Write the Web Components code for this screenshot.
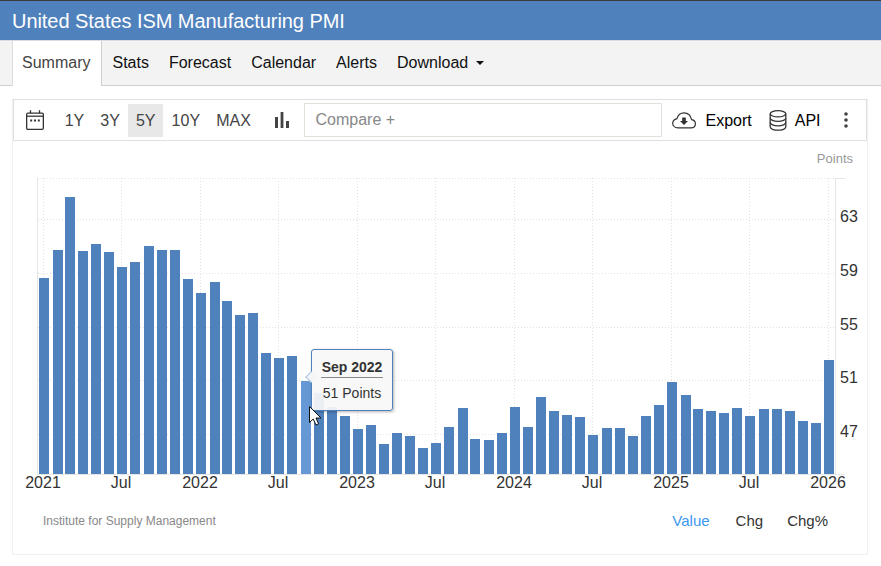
<!DOCTYPE html>
<html lang="en">
<head>
<meta charset="utf-8">
<title>United States ISM Manufacturing PMI</title>
<style>
  html, body { margin: 0; background: #fff; }
  body { font-family: "Liberation Sans", Arial, sans-serif; color: #333; }
</style>
</head>
<body>
<page-header>United States ISM Manufacturing PMI</page-header>
<nav-tabs></nav-tabs>
<chart-card>
  <chart-toolbar></chart-toolbar>
  <bar-chart></bar-chart>
  <chart-footer></chart-footer>
</chart-card>

<script>
// page title bar
class PageHeader extends HTMLElement {
    constructor() {
        super();
        this.attachShadow({ mode: "open" });
        this.shadowRoot.innerHTML = `
        <style>
          :host {
            display: block;
            box-sizing: border-box;
            height: 41px;
            padding: 9px 0 0 12px;
            background-color: #4f81bd;
            border-top: 1px solid #3b3b3b;
            border-bottom: 1px solid #d8dde3;
            color: #fff;
            font-size: 20px;
            line-height: 23px;
            letter-spacing: -0.05px;
          }
        </style>
        <slot></slot>
    `;
    }
}

// tabs under the title
class NavTabs extends HTMLElement {
    constructor() {
        super();
        this.attachShadow({ mode: "open" });
        const tabs = ["Stats", "Forecast", "Calendar", "Alerts"];
        this.shadowRoot.innerHTML = `
        <style>
          :host {
            display: flex;
            box-sizing: border-box;
            height: 45px;
            padding-left: 12px;
            background-color: #f3f3f3;
            border-bottom: 1px solid #cfcfcf;
            font-size: 16px;
            color: #111;
          }
          a {
            display: flex;
            align-items: center;
            padding: 0 10px 1px 10px;
            height: 43px;
          }
          .active {
            height: 45px;
            box-sizing: border-box;
            padding: 0 11px 1px 9px;
            background-color: #fff;
            color: #444;
            border-left: 1px solid #dcdcdc;
            border-right: 1px solid #cfcfcf;
          }
          .caret {
            width: 0;
            height: 0;
            margin-left: 8px;
            margin-top: 1px;
            border-top: 4px solid #111;
            border-left: 4px solid transparent;
            border-right: 4px solid transparent;
          }
        </style>
        <a class="active">Summary</a>
        ${tabs.map((t) => `<a>${t}</a>`).join("")}
        <a>Download<span class="caret"></span></a>
    `;
    }
}

// outer box around toolbar, chart and footer
class ChartCard extends HTMLElement {
    constructor() {
        super();
        this.attachShadow({ mode: "open" });
        this.shadowRoot.innerHTML = `
        <style>
          :host {
            display: block;
            box-sizing: border-box;
            width: 856px;
            height: 456px;
            margin: 13px 0 0 12px;
            border: 1px solid #f0f0f0;
            border-top: none;
          }
        </style>
        <slot></slot>
    `;
    }
}

class ChartToolbar extends HTMLElement {
    constructor() {
        super();
        this.attachShadow({ mode: "open" });
        const ranges = ["1Y", "3Y", "5Y", "10Y", "MAX"];
        this.shadowRoot.innerHTML = `
        <style>
          :host {
            display: flex;
            align-items: center;
            box-sizing: border-box;
            height: 42px;
            border: 1px solid #e0e0e0;
            font-size: 16px;
            color: #000;
          }
          svg { display: block; flex: none; }
          .calendar { margin: 0 13px 0 12px; }
          .ranges { display: flex; gap: 0.7px; height: 33px; margin-top: 1px; color: #444; }
          .ranges span { display: flex; align-items: center; padding: 0 7.7px; }
          .ranges .on { background-color: #e8e8e8; }
          .bars { margin: 0 15px 0 16px; }
          .compare {
            display: flex;
            align-items: center;
            box-sizing: border-box;
            width: 358px;
            height: 34px;
            padding: 0 0 0 11px;
            border: 1px solid #e2e2da;
            color: #888;
          }
          .cloud { margin: 1px 10px 0 10px; }
          .db { margin: 0 8px 0 17px; }
          .label { padding-top: 1px; }
          .dots { margin-left: 23px; }
        </style>
        <svg class="calendar" width="18" height="20" viewBox="0 0 18 20" fill="none" stroke="#333" stroke-width="1.3">
          <rect x="0.65" y="3.2" width="16.7" height="16.1" rx="1.2"/>
          <path d="M0.8 6.2H17.2"/>
          <path d="M4.5 0.3V3.2M13.5 0.3V3.2"/>
          <path d="M4.2 10.5h2M8 10.5h2M11.8 10.5h2" stroke-width="1.8"/>
        </svg>
        <div class="ranges">
          ${ranges.map((r) => `<span class="${r === "5Y" ? "on" : ""}">${r}</span>`).join("")}
        </div>
        <svg class="bars" width="14" height="16" viewBox="0 0 14 16" fill="#444">
          <rect x="0" y="5" width="3" height="11"/>
          <rect x="5.6" y="0" width="2.8" height="16"/>
          <rect x="11" y="9" width="3" height="7"/>
        </svg>
        <div class="compare">Compare +</div>
        <svg class="cloud" width="24" height="17" viewBox="0 0 24 17" fill="none" stroke="#333" stroke-width="1.2">
          <path d="M6 15.8H19C22 15.8 23.4 13.8 23.4 11.7C23.4 9.7 21.9 8 19.6 7.6C18.6 3.5 15.6 0.9 12 0.9C8.5 0.9 6 3 5 6.6C2.5 7.3 0.7 9.2 0.7 11.5C0.7 14 3 15.8 6 15.8Z"/>
          <path d="M10.2 5.5H13.8V9H16L12 13L8 9H10.2Z" fill="#333" stroke="none"/>
        </svg>
        <span class="label">Export</span>
        <svg class="db" width="18" height="21" viewBox="0 0 18 21" fill="none" stroke="#333" stroke-width="1.3">
          <ellipse cx="9" cy="3.8" rx="7.8" ry="3.1"/>
          <path d="M1.2 3.8V17C1.2 18.8 4.7 20.2 9 20.2C13.3 20.2 16.8 18.8 16.8 17V3.8"/>
          <path d="M1.2 8.2C1.2 10 4.7 11.4 9 11.4C13.3 11.4 16.8 10 16.8 8.2"/>
          <path d="M1.2 12.6C1.2 14.4 4.7 15.8 9 15.8C13.3 15.8 16.8 14.4 16.8 12.6"/>
        </svg>
        <span class="label">API</span>
        <svg class="dots" width="4" height="16" viewBox="0 0 4 16" fill="#444">
          <circle cx="2" cy="2" r="1.8"/>
          <circle cx="2" cy="8" r="1.8"/>
          <circle cx="2" cy="14" r="1.8"/>
        </svg>
    `;
    }
}

// x = left edge of bar, top = top of bar, both read off the page
const BARS = [
    [39, 278], [53, 250], [65, 197], [78, 251], [91, 244], [104, 252], [117, 267], [130, 262],
    [144, 246], [157, 250], [170, 250], [183, 279], [196, 293], [210, 282], [222, 301], [235, 315],
    [248, 313], [261, 353], [274, 358], [287, 356], [301, 381], [314, 393], [327, 407], [340, 416],
    [353, 429], [366, 425], [379, 444], [392, 433], [405, 436], [418, 448], [431, 443], [444, 427],
    [458, 408], [470, 439], [484, 440], [497, 433], [510, 407], [523, 427], [536, 397], [549, 411],
    [562, 415], [575, 417], [588, 435], [602, 428], [615, 428], [628, 436], [641, 416], [654, 405],
    [667, 382], [681, 395], [693, 409], [706, 411], [719, 413], [732, 408], [745, 416], [759, 409],
    [772, 409], [785, 411], [798, 421], [811, 423], [824, 360],
];
const X_LABELS = [
    [43, "2021"], [121, "Jul"], [200, "2022"], [278, "Jul"], [357, "2023"], [435, "Jul"],
    [514, "2024"], [592, "Jul"], [671, "2025"], [749, "Jul"], [828, "2026"],
];
const Y_LABELS = [[219, "63"], [273, "59"], [327, "55"], [380, "51"], [434, "47"]];

class BarChart extends HTMLElement {
    constructor() {
        super();
        this.attachShadow({ mode: "open" });
        const hovered = 301;
        const dotted = `stroke="#e2e2e2" stroke-dasharray="1 2"`;
        this.shadowRoot.innerHTML = `
        <style>
          :host { display: block; position: relative; height: 359px; margin-left: 0; }
          svg { display: block; font-family: "Liberation Sans", Arial, sans-serif; }
          .tip {
            position: absolute;
            left: 298px;
            top: 208px;
            box-sizing: border-box;
            width: 82px;
            height: 62px;
            background-color: rgba(247, 247, 247, 0.93);
            border: 1px solid #4f81bd;
            border-radius: 3px;
            box-shadow: 1px 1px 3px rgba(0, 0, 0, 0.3);
            font-size: 14px;
            color: #333;
            text-align: center;
          }
          .tip b {
            display: block;
            margin: 9px 9px 0 9px;
            padding-bottom: 2px;
            line-height: 16px;
            border-bottom: 1px solid #888;
          }
          .tip span { display: block; margin-top: 7px; line-height: 16px; }
          .tip i {
            position: absolute;
            left: -5px;
            top: 23px;
            width: 8px;
            height: 8px;
            background-color: #f3f5f8;
            transform: rotate(45deg);
            border-left: 1px solid #a9c2e0;
            border-bottom: 1px solid #a9c2e0;
            box-sizing: border-box;
          }
          .cursor { position: absolute; left: 296px; top: 265px; }
        </style>
        <svg width="854" height="359" viewBox="13 141 854 359">
          <text x="853" y="163" text-anchor="end" font-size="13" fill="#999">Points</text>
          <line x1="38" y1="178.5" x2="835" y2="178.5" ${dotted}/>
          ${Y_LABELS.map(([y]) => `<line x1="38" y1="${y + 0.5}" x2="835" y2="${y + 0.5}" ${dotted}/>`).join("")}
          ${X_LABELS.map(([x]) => `<line x1="${x + 0.5}" y1="178" x2="${x + 0.5}" y2="474" ${dotted}/>`).join("")}
          <path d="M37.5 178V474M835.5 178V474M835 178.5H845M37 474.5H845" stroke="#e6e6e6" fill="none"/>
          ${BARS.map(([x, top]) => `<rect x="${x}" y="${top}" width="10" height="${474 - top}" fill="${x === hovered ? "#6698d6" : "#4f81bd"}"/>`).join("")}
          <g font-size="16" fill="#333">
            ${Y_LABELS.map(([y, t]) => `<text x="840" y="${y + 3}">${t}</text>`).join("")}
            ${X_LABELS.map(([x, t]) => `<text x="${x}" y="488" text-anchor="middle">${t}</text>`).join("")}
          </g>
        </svg>
        <div class="tip"><i></i><b>Sep 2022</b><span>51 Points</span></div>
        <svg class="cursor" width="14" height="20" viewBox="0 0 14 20">
          <path d="M0.5 0.5V16.5L4.2 13L7 19L9.6 17.8L7 12H12Z" fill="#fff" stroke="#111" stroke-width="1"/>
        </svg>
    `;
    }
}

class ChartFooter extends HTMLElement {
    constructor() {
        super();
        this.attachShadow({ mode: "open" });
        this.shadowRoot.innerHTML = `
        <style>
          :host {
            display: flex;
            align-items: center;
            justify-content: space-between;
            padding: 12px 39px 0 30px;
          }
          .source { font-size: 12px; color: #888; }
          .modes { display: flex; font-size: 15px; color: #333; }
          .on { color: #3c96f0; margin-right: 26px; }
          .chg { margin-right: 24px; }
        </style>
        <span class="source">Institute for Supply Management</span>
        <div class="modes"><span class="on">Value</span><span class="chg">Chg</span><span>Chg%</span></div>
    `;
    }
}

customElements.define("page-header", PageHeader);
customElements.define("nav-tabs", NavTabs);
customElements.define("chart-card", ChartCard);
customElements.define("chart-toolbar", ChartToolbar);
customElements.define("bar-chart", BarChart);
customElements.define("chart-footer", ChartFooter);
</script>
</body>
</html>
